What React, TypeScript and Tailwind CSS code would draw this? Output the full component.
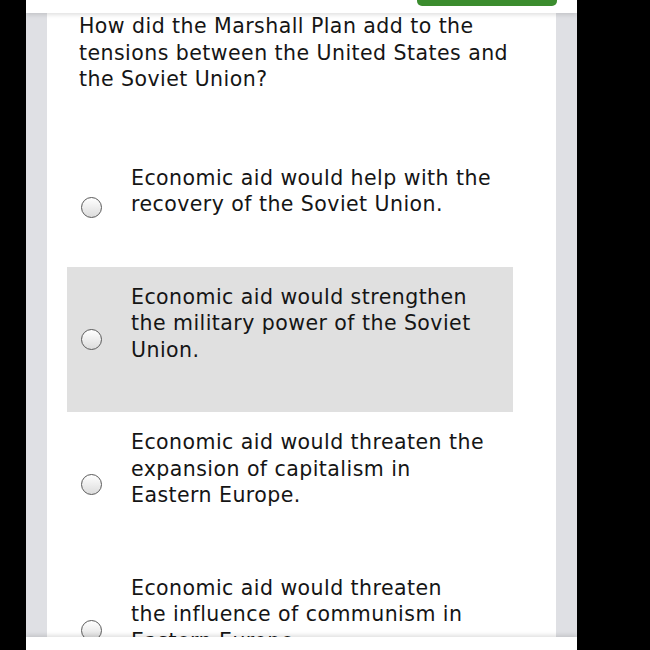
import React from 'react'

// the last answer wraps a little narrower in the reference
const options = [
  { text: 'Economic aid would help with the recovery of the Soviet Union.', width: 'max-w-[362px]' },
  { text: 'Economic aid would strengthen the military power of the Soviet Union.', width: 'max-w-[362px]' },
  { text: 'Economic aid would threaten the expansion of capitalism in Eastern Europe.', width: 'max-w-[362px]' },
  { text: 'Economic aid would threaten the influence of communism in Eastern Europe.', width: 'max-w-[340px]' },
]

function Radio() {
  return (
    <span className="block w-[21px] h-[21px] shrink-0 rounded-full border-[1.5px] border-[#5a5a5a] bg-gradient-to-b from-white to-[#dcdcdc]" />
  )
}

export default function App() {
  return (
    <div
      className="w-[650px] h-[650px] bg-black overflow-hidden"
      style={{ fontFamily: '"DejaVu Sans", Verdana, sans-serif' }}
    >
      <div className="relative ml-[26px] w-[551px] h-[650px] bg-[#dfe0e4] flex flex-col">
        {/* top bar */}
        <div className="relative z-10 h-[13px] shrink-0 bg-white shadow-[0_2px_4px_rgba(0,0,0,0.12)]">
          <div className="absolute right-[20px] top-0 w-[140px] h-[6px] bg-[#3b8c2e] rounded-b-[5px]" />
        </div>

        {/* scroll area */}
        <div className="flex-1 overflow-hidden px-[21px]">
          <div className="bg-white h-full text-[#151515] text-[20.5px] leading-[26.5px] tracking-[0.45px]">
            <p className="pl-[32px] pr-[30px]">
              How did the Marshall Plan add to the tensions between the United States and the Soviet Union?
            </p>
            <div className="mt-[55px] pl-[20px] w-[466px]">
              {options.map((o, i) => (
                <div
                  key={i}
                  className={`flex items-center pl-[14px] pr-[12px] pt-[17px] pb-[17px] ${i === 1 ? 'bg-[#e0e0e0]' : ''}`}
                >
                  <Radio />
                  <p className={`ml-[29px] mb-[32px] ${o.width}`}>{o.text}</p>
                </div>
              ))}
            </div>
          </div>
        </div>

        {/* bottom bar */}
        <div className="relative z-10 h-[13px] shrink-0 bg-white shadow-[0_-2px_4px_rgba(0,0,0,0.12)]" />
      </div>
    </div>
  )
}
